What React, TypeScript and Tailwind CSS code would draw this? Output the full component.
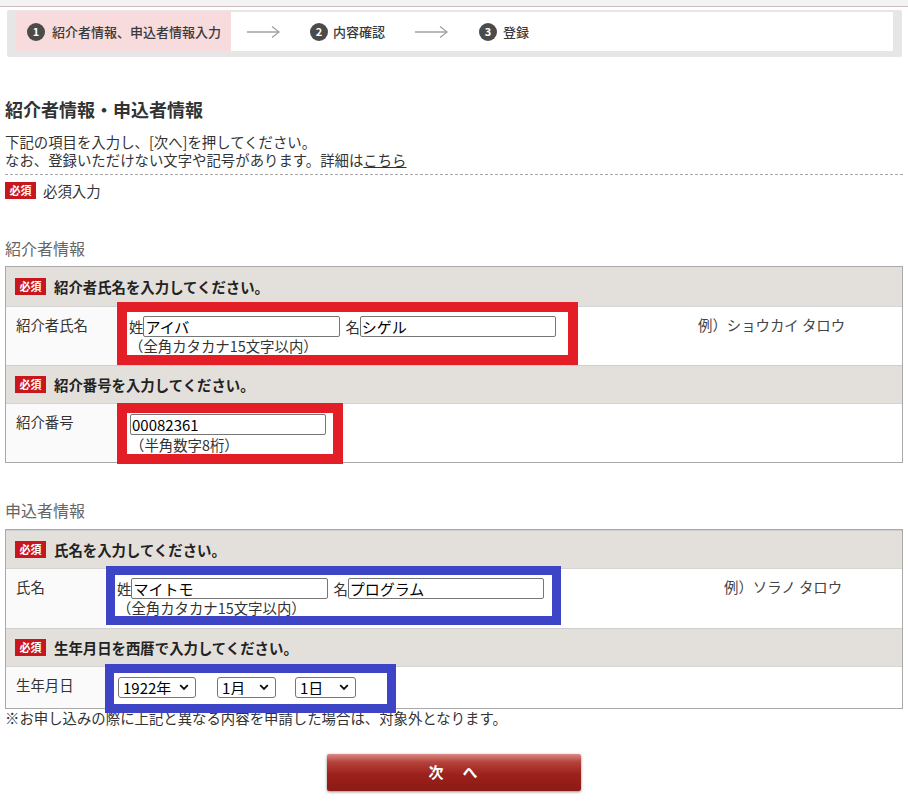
import React from 'react';

// Registration form: referrer info + applicant info (step 1 of 3)

const Badge = () => (
  <span className="inline-flex h-[17px] w-[31px] shrink-0 items-center justify-center bg-[#c8161d] text-[11px] font-bold leading-none text-white">
    必須
  </span>
);

const StepNum = ({ n }: { n: number }) => (
  <span className="flex h-[18px] w-[18px] shrink-0 items-center justify-center rounded-full bg-[#4b4b4b] text-[11px] font-bold leading-none text-white">
    {n}
  </span>
);

const StepArrow = () => (
  <svg width="35" height="14" viewBox="0 0 35 14" className="shrink-0 text-[#a3a3a3]">
    <path d="M1 7h32M26 1.5l7 5.5-7 5.5" fill="none" stroke="currentColor" strokeWidth="1.3" />
  </svg>
);

const TextBox = ({ value, className = '' }: { value: string; className?: string }) => (
  <input
    readOnly
    defaultValue={value}
    className={`h-[21px] rounded-[2px] border border-[#767676] bg-white px-[1px] text-[15px] leading-none text-black outline-none ${className}`}
  />
);

const Select = ({ value, className = '' }: { value: string; className?: string }) => (
  <div className={`relative h-[21px] ${className}`}>
    <select
      defaultValue={value}
      className="h-full w-full appearance-none rounded-[3px] border border-[#767676] bg-white pl-[4px] text-[15px] leading-none text-black outline-none"
    >
      <option>{value}</option>
    </select>
    <svg width="10" height="7" viewBox="0 0 10 7" className="pointer-events-none absolute right-[7px] top-[7px]">
      <path d="M1.2 1.2L5 5l3.8-3.8" fill="none" stroke="#111" strokeWidth="1.9" />
    </svg>
  </div>
);

const HeaderRow = ({ children, first = false }: { children: React.ReactNode; first?: boolean }) => (
  <div
    className={`flex items-center gap-[8px] bg-[#e3e0db] pl-[9px] text-[14.4px] font-bold text-[#222] ${
      first ? 'h-[39px]' : 'h-[38px] border-t border-[#cfcfcf]'
    }`}
  >
    <Badge />
    <span>{children}</span>
  </div>
);

export default function App() {
  return (
    <div className="relative min-h-[805px] w-[908px] bg-white font-['Noto_Sans_CJK_JP','Noto_Sans',sans-serif] text-[#333]">
      {/* top strip */}
      <div className="h-[7px] border-b border-[#cdbcbc] bg-[#f3f3f3]" />

      {/* step indicator */}
      <div className="ml-[7px] mt-[3px] w-[895px] rounded-[2px] bg-[#e6e6e6] px-[9px] pb-[6px] pt-[2px]">
        <div className="flex h-[39px] items-center bg-white text-[13px] font-medium text-[#3a3a3a]">
          <div className="flex h-full w-[215px] items-center gap-[7px] bg-[#f8dbdc] pl-[11px]">
            <StepNum n={1} />
            <span>紹介者情報、申込者情報入力</span>
          </div>
          <div className="ml-[15px]">
            <StepArrow />
          </div>
          <div className="ml-[29px] flex items-center gap-[5px]">
            <StepNum n={2} />
            <span>内容確認</span>
          </div>
          <div className="ml-[29px]">
            <StepArrow />
          </div>
          <div className="ml-[30px] flex items-center gap-[6px]">
            <StepNum n={3} />
            <span>登録</span>
          </div>
        </div>
      </div>

      <div className="px-[5px]">
        <h1 className="mt-[40px] text-[18px] font-bold leading-[24px] text-[#333]">紹介者情報・申込者情報</h1>
        <div className="mt-[12px] text-[14.4px] leading-[18px]">
          <p>下記の項目を入力し、[次へ]を押してください。</p>
          <p>
            なお、登録いただけない文字や記号があります。詳細は<span className="underline">こちら</span>
          </p>
        </div>
        <div className="mt-[5px] border-t border-dashed border-[#a8a8a8]" />
        <div className="mt-[7px] flex items-center gap-[7px] text-[14.4px] leading-[17px]">
          <Badge />
          <span>必須入力</span>
        </div>

        {/* referrer */}
        <h2 className="mt-[38px] text-[16px] leading-[22px] text-[#666]">紹介者情報</h2>
        <div className="mt-[7px] border border-[#a9a9a9]">
          <HeaderRow first>紹介者氏名を入力してください。</HeaderRow>
          <div className="flex h-[59px] border-t border-[#d4d4d4] bg-white text-[14.4px]">
            <div className="w-[111px] shrink-0 bg-[#fafafa] pl-[10px] pt-[8px] leading-[20px]">紹介者氏名</div>
            <div className="w-[460px] shrink-0 pl-[12px] pt-[9px]">
              <div className="flex items-center leading-[20px]">
                <span>姓</span>
                <TextBox value="アイバ" className="w-[197px]" />
                <span className="ml-[5px]">名</span>
                <TextBox value="シゲル" className="w-[196px]" />
              </div>
              <div className="leading-[17px]">（全角カタカナ15文字以内）</div>
            </div>
            <div className="pl-[121px] pt-[8px] leading-[20px] text-[#444]">例）ショウカイ タロウ</div>
          </div>
          <HeaderRow>紹介番号を入力してください。</HeaderRow>
          <div className="flex h-[59px] border-t border-[#d4d4d4] bg-white text-[14.4px]">
            <div className="w-[111px] shrink-0 bg-[#fafafa] pl-[10px] pt-[8px] leading-[20px]">紹介番号</div>
            <div className="shrink-0 pl-[13px] pt-[10px]">
              <TextBox value="00082361" className="w-[196px]" />
              <div className="leading-[17px]">（半角数字8桁）</div>
            </div>
          </div>
        </div>

        {/* applicant */}
        <h2 className="mt-[36px] text-[16px] leading-[22px] text-[#666]">申込者情報</h2>
        <div className="mt-[8px] border border-[#a9a9a9]">
          <HeaderRow>氏名を入力してください。</HeaderRow>
          <div className="flex h-[60px] border-t border-[#d4d4d4] bg-white text-[14.4px]">
            <div className="w-[99px] shrink-0 bg-[#fafafa] pl-[10px] pt-[8px] leading-[20px]">氏名</div>
            <div className="w-[455px] shrink-0 pl-[12px] pt-[9px]">
              <div className="flex items-center leading-[20px]">
                <span>姓</span>
                <TextBox value="マイトモ" className="w-[197px]" />
                <span className="ml-[5px]">名</span>
                <TextBox value="プログラム" className="w-[196px]" />
              </div>
              <div className="leading-[17px]">（全角カタカナ15文字以内）</div>
            </div>
            <div className="pl-[164px] pt-[8px] leading-[20px] text-[#444]">例）ソラノ タロウ</div>
          </div>
          <HeaderRow>生年月日を西暦で入力してください。</HeaderRow>
          <div className="flex h-[42px] border-t border-[#d4d4d4] bg-white text-[14.4px]">
            <div className="w-[99px] shrink-0 bg-[#fafafa] pl-[10px] pt-[8px] leading-[20px]">生年月日</div>
            <div className="flex items-start pl-[13px] pt-[10px]">
              <Select value="1922年" className="w-[78px]" />
              <Select value="1月" className="ml-[21px] w-[59px]" />
              <Select value="1日" className="ml-[19px] w-[61px]" />
            </div>
          </div>
        </div>
        <p className="text-[14.4px] leading-[17px]">※お申し込みの際に上記と異なる内容を申請した場合は、対象外となります。</p>

        <div className="mt-[28px] flex justify-center">
          <button className="h-[37px] w-[254px] rounded-[2px] bg-[linear-gradient(to_bottom,#d98a85_0%,#b5423b_22%,#9d211c_55%,#8b1a15_100%)] text-[15px] font-bold tracking-[2px] text-white shadow-[0_1px_3px_rgba(0,0,0,0.45)]">
            次　へ
          </button>
        </div>
      </div>

      {/* annotation frames */}
      <div className="pointer-events-none absolute left-[117px] top-[302px] h-[63px] w-[461px] border-[10px] border-[#e41e26]" />
      <div className="pointer-events-none absolute left-[117px] top-[403px] h-[61px] w-[226px] border-[10px] border-[#e41e26]" />
      <div className="pointer-events-none absolute left-[106px] top-[566px] h-[59px] w-[455px] border-[9px] border-[#3d45c6]" />
      <div className="pointer-events-none absolute left-[105px] top-[664px] h-[49px] w-[291px] border-[9px] border-[#3d45c6]" />
    </div>
  );
}
